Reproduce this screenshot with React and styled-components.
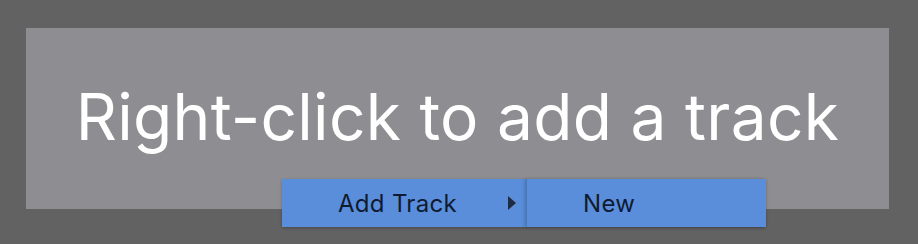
import React from "react";
import styled, { createGlobalStyle } from "styled-components";

const GlobalStyle = createGlobalStyle`
  html, body {
    margin: 0;
    padding: 0;
    background: #626262;
    font-family: Inter, "Noto Sans", sans-serif;
  }
`;

const Page = styled.div`
  position: relative;
  width: 918px;
  height: 244px;
  padding: 28px 29px 35px 26px;
  box-sizing: border-box;
  background: #626262;
`;

const Panel = styled.div`
  height: 100%;
  background: #8e8d92;
  display: flex;
  align-items: center;
  justify-content: center;
  padding-bottom: 4px;
  box-sizing: border-box;
`;

const Hint = styled.div`
  color: #ffffff;
  font-size: 64px;
  font-weight: 400;
  letter-spacing: 0.3px;
`;

const Menu = styled.div`
  position: absolute;
  left: 282px;
  top: 179px;
  display: flex;
  box-shadow: 0 1px 3px rgba(0, 0, 0, 0.25);
`;

const MenuItem = styled.div`
  position: relative;
  width: ${(p) => p.width}px;
  height: 48px;
  box-sizing: border-box;
  background: #5a8edb;
  color: #0f1b33;
  font-size: 24px;
  letter-spacing: 0.3px;
  display: flex;
  align-items: center;
  padding-left: ${(p) => p.indent}px;
  border-left: ${(p) => (p.divider ? "1px solid #4a78bb" : "none")};
  box-shadow: ${(p) => (p.divider ? "-2px 0 3px rgba(0, 0, 0, 0.15)" : "none")};
`;

const Arrow = styled.span`
  position: absolute;
  right: 10px;
  top: 50%;
  transform: translateY(-50%);
  width: 0;
  height: 0;
  border-top: 7px solid transparent;
  border-bottom: 7px solid transparent;
  border-left: 8px solid #1d2b44;
`;

export default function App() {
  return (
    <>
      <GlobalStyle />
      <Page>
        <Panel>
          <Hint>Right-click to add a track</Hint>
        </Panel>
        <Menu>
          <MenuItem width={244} indent={56}>
            Add Track
            <Arrow />
          </MenuItem>
          <MenuItem width={240} indent={56} divider>
            New
          </MenuItem>
        </Menu>
      </Page>
    </>
  );
}
